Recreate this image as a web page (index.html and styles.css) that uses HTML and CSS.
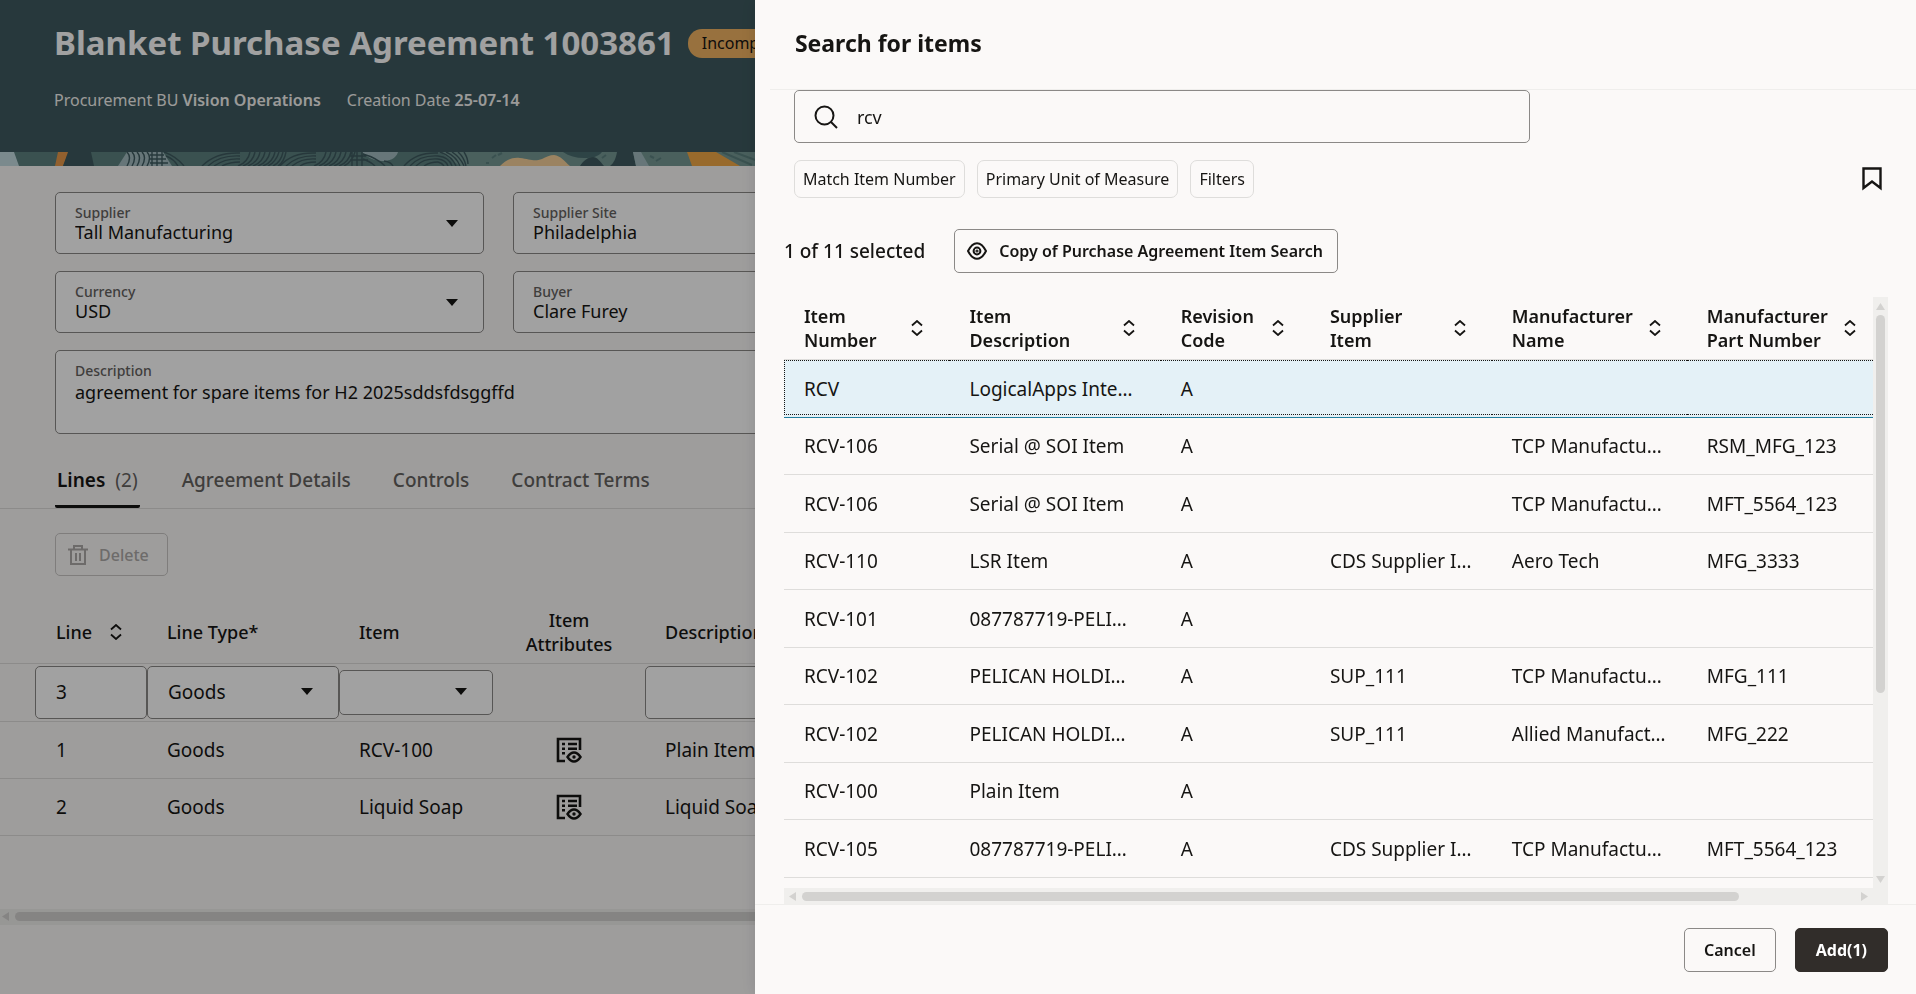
FILE: index.html
```html
<!DOCTYPE html>
<html lang="en">
<head>
<meta charset="utf-8">
<title>Blanket Purchase Agreement 1003861</title>
<link rel="stylesheet" href="styles.css">
</head>
<body>
<svg class="sprite" aria-hidden="true">
  <symbol id="caret" viewBox="0 0 12 7"><path d="M0 0h12L6 7z" fill="currentColor"/></symbol>
  <symbol id="sort" viewBox="0 0 12 16"><path d="M1 5.500l5-4.500 5 4.500M1 10.500l5 4.500 5-4.500" fill="none" stroke="currentColor" stroke-width="1.800"/></symbol>
  <symbol id="attrs" viewBox="0 0 26 26">
    <path d="M9 24H2V2h22v11" fill="none" stroke="currentColor" stroke-width="2.600"/>
    <path d="M6 7h3M12 7h9M6 11.700h3M12 11.700h9M6 16.300h3" stroke="currentColor" stroke-width="2.400"/>
    <path d="M11.500 20q3-4.500 6.500-4.500t6.500 4.500q-3 4.500-6.500 4.500t-6.500-4.500z" fill="none" stroke="currentColor" stroke-width="2.400"/>
    <circle cx="18" cy="20" r="1.700" fill="currentColor"/>
  </symbol>
</svg>

<main class="page">
  <header class="banner">
    <div class="banner-title">
      <h1>Blanket Purchase Agreement 1003861</h1>
      <span class="status">Incomplete</span>
    </div>
    <div class="banner-meta">
      <span>Procurement BU <b>Vision Operations</b></span>
      <span>Creation Date <b>25-07-14</b></span>
    </div>
  </header>
  <svg class="strip" viewBox="0 0 1916 14" preserveAspectRatio="xMinYMin slice" aria-hidden="true">
    <rect width="1916" height="14" fill="#5c817f"/>
    <path d="M440 0H1916V14H460z" fill="#759894"/>
    <path d="M0 0h14l5 14H0z" fill="#c3dbe0"/>
    <path d="M58 0h11l-6 14h-8z" fill="#e8994a"/>
    <path d="M68 0h23l3 14H63z" fill="#3e5a5f"/>
    <path d="M127 0h36l9 14h-54z" fill="#a3bcc0"/>
    <path d="M362 0h36c-2 7-9 9-16 9s-14-3-20-9z" fill="#a3bcc0"/>
    <g fill="none" stroke="#3e5a5f" stroke-width="1.400">
      <path d="M127 0q5 5 0 14M132 0q5 5 0 14M137 0q5 5 0 14M142 0q5 5 0 14M147 0q5 5 0 14M152 0v14M157 0v14M162 0v14M150 3h14M150 7h16M150 11h18M164 0q12 4 20 14M166 4q8 3 12 10"/>
      <path d="M202 14Q216 0 240 1M208 14Q220 3 240 4M214 14Q226 6 240 7M222 14Q230 10 240 10"/>
      <path d="M238 14q10-4 12-14M243 14q10-4 12-14M248 14q10-4 12-14M253 14q10-4 12-14M258 14q10-4 12-14M263 14q10-4 12-14M268 14q8-4 11-14M273 14q8-4 10-14M278 14q6-4 8-14"/>
      <path d="M280 14Q292 0 316 1M286 14Q298 3 316 4M292 14Q302 6 316 7M300 14Q306 10 316 10"/>
      <path d="M314 14q10-4 12-14M319 14q10-4 12-14M324 14q10-4 12-14M329 14q10-4 12-14M334 14q10-4 12-14M339 14q10-4 12-14M344 14q8-4 11-14M352 0v14M357 0v14M362 0v14M350 4h16M350 8h18M363 2q14 4 22 12M363 7q8 3 12 7M384 9q7 1 9 5"/>
      <path d="M404 14Q416 0 438 1M410 14Q420 3 438 4M416 14Q424 6 438 7M424 14Q430 10 438 10"/>
      <path d="M438 10q4 1 6 4M438 7q8 1 10 7M438 4q11 1 14 10M440 0q12 4 16 14M446 0q10 4 14 14M452 0q8 5 12 14M458 0q6 5 8 14M464 0q4 6 4 12"/>
    </g>
    <path d="M492 6l4-3M498 3l4-2M650 4l4 2M656 9l5-3M590 12l4-4M486 11h3M602 6l4-3" stroke="#5c817f" stroke-width="2"/>
    <path d="M500 14c6-6 12-9 20-8 10 1 14 4 22 1 4-2 8-4 12-4 7 1 10 6 16 11z" fill="#f5d09a"/>
    <path d="M563 0h39c-4 5-10 6-18 6s-15-2-21-6z" fill="#4a6d70"/>
    <path d="M580 14c3-5 8-9 13-9 4 0 7 4 11 9zM617 0h16l3 14h-26c4-3 6-8 7-14z" fill="#3e5a5f"/>
    <path d="M633 0h8l8 14h-13z" fill="#a3bcc0"/>
    <path d="M687 0h29l24 14h-48z" fill="#f1a847"/>
    <path d="M722 0l30 13M734 0l24 9" stroke="#5c817f" stroke-width="2"/>
  </svg>

  <section class="form">
    <div class="field"><label for="supplier">Supplier</label><select id="supplier"><option>Tall Manufacturing</option></select><svg class="caret"><use href="#caret"/></svg></div>
    <div class="field"><label for="site">Supplier Site</label><select id="site"><option>Philadelphia</option></select></div>
    <div class="field start"><label for="currency">Currency</label><select id="currency"><option>USD</option></select><svg class="caret"><use href="#caret"/></svg></div>
    <div class="field"><label for="buyer">Buyer</label><select id="buyer"><option>Clare Furey</option></select></div>
    <div class="field wide"><label for="desc">Description</label><textarea id="desc" rows="1">agreement for spare items for H2 2025sddsfdsggffd</textarea></div>
  </section>

  <nav class="tabs">
    <a class="active" href="#lines">Lines <span>(2)</span></a>
    <a href="#details">Agreement Details</a>
    <a href="#controls">Controls</a>
    <a href="#terms">Contract Terms</a>
  </nav>

  <section class="lines" id="lines">
    <button class="delete" type="button" disabled>
      <svg viewBox="0 0 20 22" width="20" height="22" fill="none" stroke="currentColor" stroke-width="2"><path d="M0 5.500h20M6 5V2h8v3M3 6v14h14V6M8 9v8M12 9v8"/></svg>
      Delete
    </button>
    <table class="line-table">
      <colgroup><col class="l1"><col class="l2"><col class="l3"><col class="l4"><col></colgroup>
      <thead><tr>
        <th class="first"><span class="sorted">Line <svg class="sort"><use href="#sort"/></svg></span></th><th>Line Type*</th><th>Item</th><th class="center">Item<br>Attributes</th><th>Description</th>
      </tr></thead>
      <tbody>
        <tr class="edit">
          <td class="first"><input class="box" aria-label="Line" value="3"></td>
          <td><div class="pick"><select class="box" aria-label="Line Type"><option>Goods</option></select><svg class="caret"><use href="#caret"/></svg></div></td>
          <td><div class="pick small"><select class="box" aria-label="Item"><option></option></select><svg class="caret"><use href="#caret"/></svg></div></td>
          <td></td>
          <td><input class="box" aria-label="Description"></td>
        </tr>
        <tr><td class="first">1</td><td>Goods</td><td>RCV-100</td><td class="center"><button class="icon" type="button" aria-label="Item attributes"><svg width="26" height="26"><use href="#attrs"/></svg></button></td><td>Plain Item</td></tr>
        <tr><td class="first">2</td><td>Goods</td><td>Liquid Soap</td><td class="center"><button class="icon" type="button" aria-label="Item attributes"><svg width="26" height="26"><use href="#attrs"/></svg></button></td><td>Liquid Soap</td></tr>
      </tbody>
    </table>
    <div class="hbar page-bar"><svg viewBox="0 0 7 9" width="7" height="9"><path d="M7 0v9L0 4.500z" fill="currentColor"/></svg><i></i></div>
  </section>
</main>
<div class="scrim"></div>

<aside class="drawer" role="dialog" aria-labelledby="drawer-title">
  <header class="drawer-head"><h2 id="drawer-title">Search for items</h2></header>
  <div class="drawer-body">
    <div class="search">
      <svg viewBox="0 0 24 24" width="24" height="24" fill="none" stroke="currentColor" stroke-width="2"><circle cx="10.500" cy="10.500" r="9"/><path d="M17 17l6 6"/></svg>
      <input type="text" aria-label="Search" value="rcv">
    </div>
    <div class="chips">
      <button type="button">Match Item Number</button>
      <button type="button">Primary Unit of Measure</button>
      <button type="button">Filters</button>
      <button class="icon bookmark" type="button" aria-label="Save search"><svg viewBox="0 0 20 24" width="20" height="24"><path d="M1.500 1.500h17v19.500L10 14.500 1.500 21z" fill="none" stroke="currentColor" stroke-width="2.400"/></svg></button>
    </div>
    <div class="toolbar">
      <span class="count">1 of 11 selected</span>
      <button class="btn view" type="button">
        <svg viewBox="0 0 20 18" width="20" height="18" fill="none" stroke="currentColor" stroke-width="2"><path d="M1 9Q5 1.200 10 1.200T19 9Q15 16.800 10 16.800T1 9z"/><circle cx="10" cy="9" r="3.400"/><circle cx="10" cy="9" r=".6"/></svg>
        Copy of Purchase Agreement Item Search
      </button>
    </div>
    <div class="scroller">
      <div class="viewport">
        <table class="items">
          <colgroup><col class="c1"><col class="c2"><col class="c3"><col class="c4"><col class="c5"><col></colgroup>
          <thead><tr>
            <th><div>Item<br>Number<svg class="sort"><use href="#sort"/></svg></div></th>
            <th><div>Item<br>Description<svg class="sort"><use href="#sort"/></svg></div></th>
            <th><div>Revision<br>Code<svg class="sort"><use href="#sort"/></svg></div></th>
            <th><div>Supplier<br>Item<svg class="sort"><use href="#sort"/></svg></div></th>
            <th><div>Manufacturer<br>Name<svg class="sort"><use href="#sort"/></svg></div></th>
            <th><div>Manufacturer<br>Part Number<svg class="sort"><use href="#sort"/></svg></div></th>
          </tr></thead>
          <tbody>
            <tr class="selected"><td>RCV</td><td>LogicalApps Inte…</td><td>A</td><td></td><td></td><td></td></tr>
            <tr><td>RCV-106</td><td>Serial @ SOI Item</td><td>A</td><td></td><td>TCP Manufactu…</td><td>RSM_MFG_123</td></tr>
            <tr><td>RCV-106</td><td>Serial @ SOI Item</td><td>A</td><td></td><td>TCP Manufactu…</td><td>MFT_5564_123</td></tr>
            <tr><td>RCV-110</td><td>LSR Item</td><td>A</td><td>CDS Supplier I…</td><td>Aero Tech</td><td>MFG_3333</td></tr>
            <tr><td>RCV-101</td><td>087787719-PELI…</td><td>A</td><td></td><td></td><td></td></tr>
            <tr><td>RCV-102</td><td>PELICAN HOLDI…</td><td>A</td><td>SUP_111</td><td>TCP Manufactu…</td><td>MFG_111</td></tr>
            <tr><td>RCV-102</td><td>PELICAN HOLDI…</td><td>A</td><td>SUP_111</td><td>Allied Manufact…</td><td>MFG_222</td></tr>
            <tr><td>RCV-100</td><td>Plain Item</td><td>A</td><td></td><td></td><td></td></tr>
            <tr><td>RCV-105</td><td>087787719-PELI…</td><td>A</td><td>CDS Supplier I…</td><td>TCP Manufactu…</td><td>MFT_5564_123</td></tr>
          </tbody>
        </table>
      </div>
      <div class="vbar"><svg viewBox="0 0 9 7" width="9" height="7"><path d="M0 7h9L4.500 0z" fill="currentColor"/></svg><div class="track"><i></i></div><svg viewBox="0 0 9 7" width="9" height="7"><path d="M0 0h9L4.500 7z" fill="currentColor"/></svg></div>
      <div class="hbar"><svg viewBox="0 0 7 9" width="7" height="9"><path d="M7 0v9L0 4.500z" fill="currentColor"/></svg><div class="track"><i></i></div><svg viewBox="0 0 7 9" width="7" height="9"><path d="M0 0v9l7-4.500z" fill="currentColor"/></svg></div>
      <div class="corner"></div>
    </div>
  </div>
  <footer class="drawer-foot">
    <button class="btn" type="button">Cancel</button>
    <button class="btn primary" type="button">Add(1)</button>
  </footer>
</aside>
</body>
</html>
```

FILE: styles.css
```css
* { box-sizing: border-box; }
html, body { height: 100%; }
body {
  margin: 0;
  overflow: hidden;
  background: #fbf9f8;
  color: #161513;
  font-family: "Noto Sans", "Open Sans", sans-serif;
  font-size: 19px;
  line-height: 24px;
}
button, input, select, textarea { font: inherit; color: inherit; margin: 0; }
h1, h2 { margin: 0; font-weight: 700; }
.sprite { position: absolute; width: 0; height: 0; }
.caret { width: 12px; height: 7px; }
.sort { width: 12px; height: 16px; flex: none; }
.icon { border: 0; background: none; padding: 0; display: inline-flex; }

/* Agreement page */
.page { height: 100%; overflow: hidden; }
.banner { height: 152px; padding: 20px 54px 0; background: #3e5a5f; color: #fff; white-space: nowrap; }
.banner-title { display: flex; align-items: center; gap: 13px; }
.banner h1 { font-size: 33px; line-height: 46px; }
.status { padding: 0 14px; border-radius: 14px; background: #f1b362; color: #161513; font-size: 16px; line-height: 29px; }
.banner-meta { display: flex; gap: 26px; margin-top: 22px; font-size: 16px; color: #f5f4f2; }
.banner-meta b { font-weight: 600; }
.strip { display: block; width: 100%; height: 14px; }

.form { display: grid; grid-template-columns: repeat(4, 1fr); gap: 17px 29px; padding: 26px 58px 0 55px; }
.field { position: relative; display: flex; flex-direction: column; justify-content: center; height: 62px; padding: 1px 19px 0; border: 1px solid #8b8987; border-radius: 5px; background: #fff; }
.field.start { grid-column: 1; }
.field.wide { grid-column: 1 / -1; height: 84px; padding-top: 11px; justify-content: flex-start; }
.field label { color: #65625f; font-size: 14px; line-height: 17px; font-weight: 500; }
.field select, .field textarea { appearance: none; border: 0; padding: 0; background: none; resize: none; overflow: hidden; font-size: 18px; }
.field select { height: 22px; line-height: 22px; }
.field textarea { height: 26px; line-height: 26px; }
.field .caret { position: absolute; right: 25px; top: 27px; }

.tabs { display: flex; gap: 42px; margin-top: 20px; padding: 0 55px; border-bottom: 1px solid #dedddb; }
.tabs a { display: flex; gap: 10px; padding: 14px 0 13px; border-bottom: 3px solid transparent; color: #65625f; font-weight: 500; text-decoration: none; }
.tabs .active { padding-left: 2px; padding-right: 2px; border-color: #161513; border-radius: 2px; color: #161513; font-weight: 600; }
.tabs .active span { color: #65625f; font-weight: 400; }

.delete { display: flex; align-items: center; gap: 11px; height: 43px; margin: 24px 0 25px 55px; padding: 0 18px 0 12px; border: 1px solid #c9c7c5; border-radius: 5px; background: none; color: #adaaa8; font-size: 16px; font-weight: 500; }
.line-table { width: 100%; border-collapse: collapse; table-layout: fixed; }
.l1 { width: 147px; }
.l2 { width: 192px; }
.l3 { width: 154px; }
.l4 { width: 152px; }
.line-table th { height: 62px; padding: 0 0 0 20px; border-bottom: 1px solid #dedddb; text-align: left; font-weight: 500; font-size: 18px; vertical-align: middle; }
.line-table td { height: 57px; padding: 0 0 0 20px; border-bottom: 1px solid #dedddb; }
.line-table .first { padding-left: 56px; }
.line-table .center { padding: 0; text-align: center; }
.line-table .icon { vertical-align: middle; }
.sorted { display: flex; align-items: center; gap: 18px; }
.line-table .edit td { height: 58px; padding: 0; }
.line-table .edit .first { padding-left: 35px; }
.box { display: block; width: 100%; height: 53px; padding: 0 20px; border: 1px solid #8b8987; border-radius: 5px; background: #fff; appearance: none; }
.small .box { height: 45px; }
.pick { position: relative; }
.pick .caret { position: absolute; right: 26px; top: 50%; margin-top: -4px; }

/* Scroll bars */
.hbar, .vbar { display: flex; align-items: center; background: #f0efed; color: #d3d2d0; }
.hbar { height: 16px; padding: 0 5px; gap: 6px; }
.vbar { flex-direction: column; padding: 6px 0 5px; gap: 5px; }
.hbar svg, .vbar svg { flex: none; }
.track { flex: 1; }
.track i, .page-bar i { display: block; border-radius: 5px; background: #d3d2d0; }
.hbar .track i { width: 89%; height: 9px; }
.vbar .track i { width: 9px; height: 68%; }
.page-bar { margin-top: 73px; padding: 0 0 0 2px; }
.page-bar i { flex: 1; height: 9px; }

.scrim { position: fixed; inset: 0; background: rgba(0, 0, 0, .37); }

/* Item search drawer */
.drawer { position: fixed; top: 0; right: 0; bottom: 0; width: 60.6%; display: flex; flex-direction: column; background: #fbf9f8; box-shadow: 0 0 16px rgba(0, 0, 0, .12); }
.drawer-head { height: 90px; margin-left: 15px; padding: 26px 25px 0; border-bottom: 1px solid #efeeec; }
.drawer-head h2 { font-size: 23px; line-height: 34px; }
.drawer-body { flex: 1; min-height: 0; display: flex; flex-direction: column; padding: 0 28px 0 29px; }
.search { display: flex; align-items: center; gap: 19px; height: 53px; width: 66.7%; margin-left: 10px; padding: 0 19px; border: 1px solid #8b8987; border-radius: 5px; }
.search input { flex: 1; border: 0; padding: 0; background: none; outline: 0; font-size: 18px; }
.chips { display: flex; align-items: center; gap: 12px; margin: 17px 0 0 10px; }
.chips button { font-size: 16px; }
.chips button:not(.icon) { height: 38px; padding: 0 8px; border: 1px solid #dedddb; border-radius: 7px; background: none; }
.bookmark { margin: 0 6px 0 auto; }
.toolbar { display: flex; align-items: center; gap: 29px; margin: 31px 0 24px; }
.count { font-weight: 500; }
.btn { display: flex; align-items: center; gap: 12px; height: 44px; padding: 0 19px; border: 1px solid #8b8987; border-radius: 5px; background: none; font-size: 16px; font-weight: 600; }
.view { padding: 0 14px 0 12px; }
.scroller { flex: 1; min-height: 0; display: grid; grid-template: 1fr 16px / 1fr 15px; }
.corner { background: #f0efed; }
.viewport { overflow: hidden; }
.items { width: 100%; border-collapse: separate; border-spacing: 0; table-layout: fixed; white-space: nowrap; }
.c1 { width: 15.2%; }
.c2 { width: 19.4%; }
.c3 { width: 13.7%; }
.c4 { width: 16.7%; }
.c5 { width: 17.9%; }
.items th { height: 63px; padding: 0 17px 0 20px; border-bottom: 1px solid #dedddb; text-align: left; font-size: 18px; font-weight: 600; }
.items th div { position: relative; }
.items th .sort { position: absolute; right: 9px; top: 16px; }
.items th:last-child .sort { right: 0; }
.items td { position: relative; height: 58px; padding: 0 0 0 20px; border-bottom: 1px solid #dedddb; }
.items tr:nth-child(even) td { height: 57px; }
.items .selected td { background: #e4f1f7; border-color: #227e9e; }
.items .selected td::after { content: ""; position: absolute; inset: 0 0 2px; border: 1px dotted #161513; border-width: 1px 0; }
.items .selected td:first-child::after { border-left-width: 1px; }
.drawer-foot { display: flex; justify-content: flex-end; gap: 19px; height: 90px; padding: 23px 28px 0; border-top: 1px solid #efeeec; }
.primary { padding: 0 20px; border-color: #312d2a; background: #312d2a; color: #fff; font-weight: 700; }
```
